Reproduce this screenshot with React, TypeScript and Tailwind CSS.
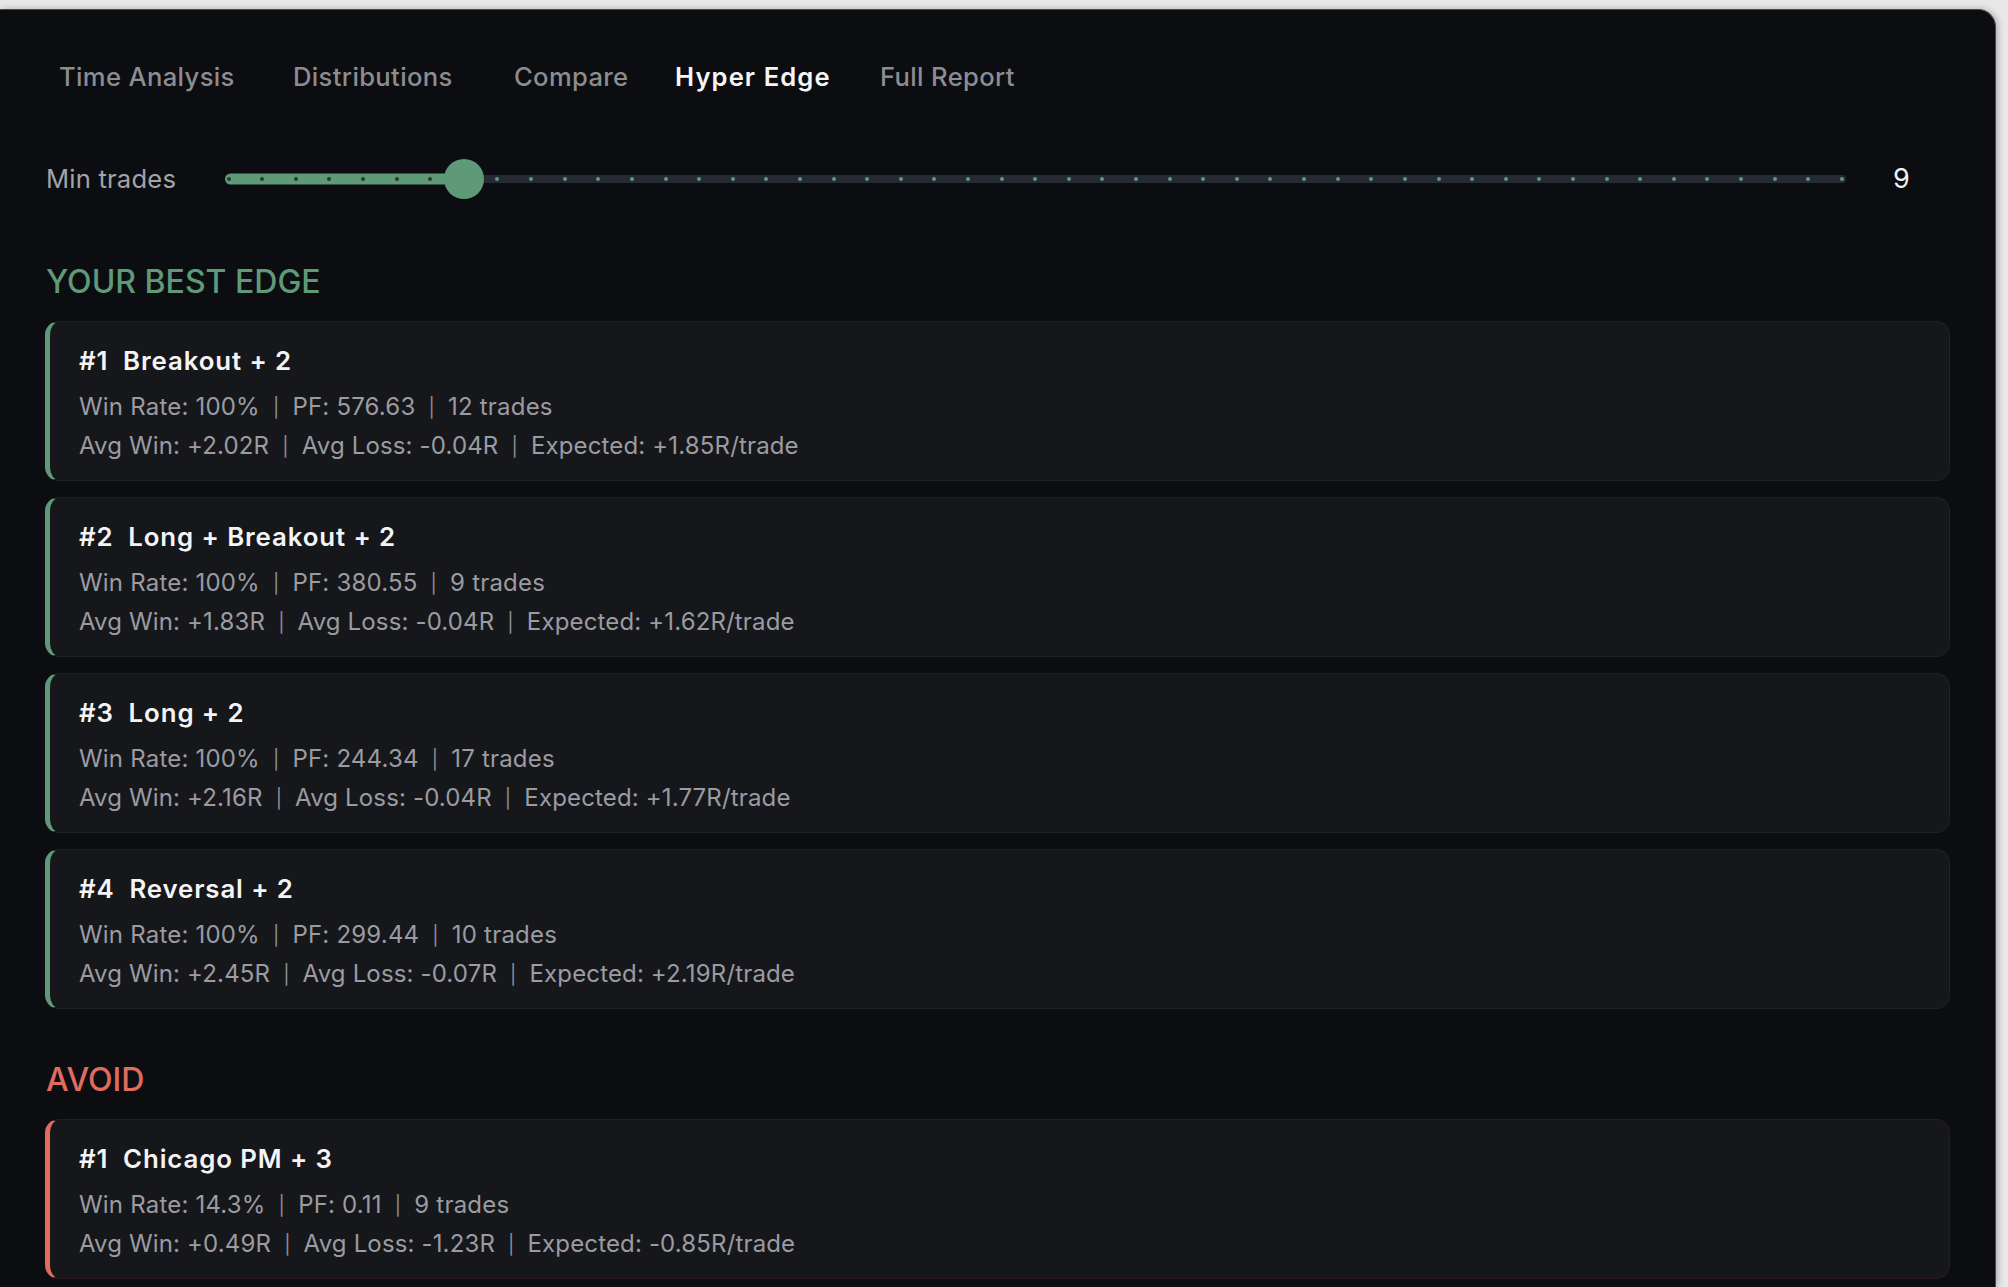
const tabs = [
  { label: "Time Analysis", w: "w-[234px]" },
  { label: "Distributions", w: "w-[221px]" },
  { label: "Compare", w: "w-[161px]" },
  { label: "Hyper Edge", w: "w-[205px]", active: true },
  { label: "Full Report", w: "w-[200px]" },
];

type Edge = {
  rank: number;
  name: string;
  winRate: string;
  pf: string;
  trades: number;
  avgWin: string;
  avgLoss: string;
  expected: string;
};

const bestEdges: Edge[] = [
  { rank: 1, name: "Breakout + 2", winRate: "100%", pf: "576.63", trades: 12, avgWin: "+2.02R", avgLoss: "-0.04R", expected: "+1.85R" },
  { rank: 2, name: "Long + Breakout + 2", winRate: "100%", pf: "380.55", trades: 9, avgWin: "+1.83R", avgLoss: "-0.04R", expected: "+1.62R" },
  { rank: 3, name: "Long + 2", winRate: "100%", pf: "244.34", trades: 17, avgWin: "+2.16R", avgLoss: "-0.04R", expected: "+1.77R" },
  { rank: 4, name: "Reversal + 2", winRate: "100%", pf: "299.44", trades: 10, avgWin: "+2.45R", avgLoss: "-0.07R", expected: "+2.19R" },
];

const avoidEdges: Edge[] = [
  { rank: 1, name: "Chicago PM + 3", winRate: "14.3%", pf: "0.11", trades: 9, avgWin: "+0.49R", avgLoss: "-1.23R", expected: "-0.85R" },
];

const MIN = 2;
const MAX = 50;
const VALUE = 9;

function MinTradesSlider() {
  const steps = MAX - MIN + 1;
  const active = VALUE - MIN;
  // fill ends at the thumb center
  const pct = active / (steps - 1);

  return (
    <div className="mt-[66px] flex h-[40px] items-center">
      <div className="ml-[1px] w-[179px] text-[25.6px] leading-[32px] tracking-[0.2px] text-[#a3a3a8]">Min trades</div>
      <div className="relative flex h-[8px] flex-1 items-center rounded-full bg-[#262a32]">
        <div
          className="absolute left-0 top-1/2 h-[11px] -translate-y-1/2 rounded-l-full bg-[#5f9a78]"
          style={{ width: `calc(3.6px + ${pct} * (100% - 7.6px))` }}
        />
        <div className="relative z-10 flex w-full items-center justify-between px-[1.6px]">
          {Array.from({ length: steps }).map((_, i) => (
            <div
              key={i}
              className={`h-[4px] w-[4px] rounded-full ${i < active ? "bg-[#2a3a33]" : "bg-[#5f9a78]"}`}
            />
          ))}
        </div>
        <div
          className="absolute top-1/2 z-20 h-[40px] w-[40px] -translate-x-1/2 -translate-y-1/2 rounded-full bg-[#5f9a78]"
          style={{ left: `calc(3.6px + ${pct} * (100% - 7.6px))` }}
        />
      </div>
      <div className="w-[104px] pl-[47px] text-[27px] leading-[32px] text-[#f2f2f2]">{VALUE}</div>
    </div>
  );
}

function Sep() {
  return <span className="relative -top-[1px] mx-[13px] text-[19px] leading-none text-[#8e8e94]">|</span>;
}

function EdgeCard({ edge, tone }: { edge: Edge; tone: "good" | "bad" }) {
  return (
    <div
      className={`rounded-[14px] border border-l-[5px] bg-[#16171b] pb-[15px] pl-[29px] pt-[23px] ${
        tone === "good" ? "border-[#1b2621] border-l-[#5f9a78]" : "border-[#2a1c1c] border-l-[#e06c5f]"
      }`}
    >
      <div className="whitespace-pre text-[25.8px] font-semibold leading-[32px] tracking-[0.9px] text-[#f4f4f5]">
        {`#${edge.rank}  ${edge.name}`}
      </div>
      <div className="mt-[10px] h-[39px] whitespace-nowrap text-[24px] leading-[39px] tracking-[0.2px] text-[#9b9ba1]">
        Win Rate: {edge.winRate}
        <Sep />
        PF: {edge.pf}
        <Sep />
        {edge.trades} trades
      </div>
      <div className="h-[39px] whitespace-nowrap text-[24px] leading-[39px] tracking-[0.15px] text-[#9b9ba1]">
        Avg Win: {edge.avgWin}
        <Sep />
        Avg Loss: {edge.avgLoss}
        <Sep />
        Expected: {edge.expected}/trade
      </div>
    </div>
  );
}

export default function App() {
  return (
    <div className="h-[1287px] w-full overflow-hidden bg-[#e8e8e8] pr-[12px] pt-[9px]" style={{ fontFamily: "Inter, 'Noto Sans', sans-serif" }}>
      <div className="h-full rounded-tr-[18px] border-r border-t border-[#4a4a4c] bg-[#0c0d10] px-[45px] pt-[51px] shadow-[2px_0_6px_rgba(0,0,0,0.25)]">
        {/* Tabs */}
        <div className="ml-[14px] flex h-[32px] items-center">
          {tabs.map((t) => (
            <div
              key={t.label}
              className={`${t.w} shrink-0 text-[25.6px] leading-[32px] ${
                t.active
                  ? "font-semibold tracking-[1.1px] text-[#f5f5f5]"
                  : "font-medium tracking-[0.35px] text-[#8c8c91]"
              }`}
            >
              {t.label}
            </div>
          ))}
        </div>

        <MinTradesSlider />

        {/* Best edges */}
        <div className="ml-[1px] mt-[63px] text-[32px] font-medium leading-[40px] text-[#5f9a78]">YOUR BEST EDGE</div>
        <div className="mt-[19px] flex flex-col gap-[16px]">
          {bestEdges.map((e) => (
            <EdgeCard key={e.rank} edge={e} tone="good" />
          ))}
        </div>

        {/* Avoid */}
        <div className="ml-[1px] mt-[51px] text-[32px] font-medium leading-[40px] text-[#e06c5f]">AVOID</div>
        <div className="mt-[19px] flex flex-col gap-[16px]">
          {avoidEdges.map((e) => (
            <EdgeCard key={e.rank} edge={e} tone="bad" />
          ))}
        </div>
      </div>
    </div>
  );
}
